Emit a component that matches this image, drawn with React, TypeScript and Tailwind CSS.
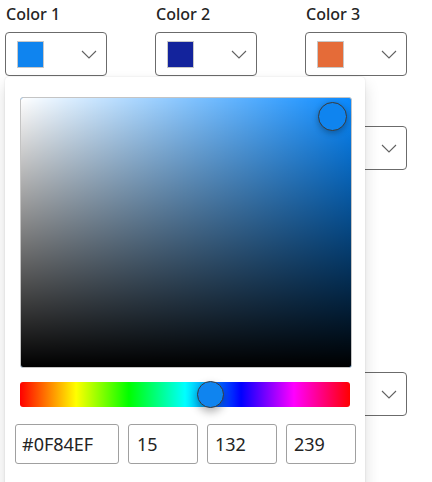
import { FC, ReactElement } from "react";

const Chevron: FC = (): ReactElement => (
  <svg width="16" height="9" viewBox="0 0 16 9" fill="none">
    <path d="M1 1l7 7 7-7" stroke="#616161" strokeWidth="1.1" />
  </svg>
);

const SwatchButton: FC<{ color: string }> = ({ color }): ReactElement => (
  <button className="flex items-center justify-between w-[102px] h-[44px] pl-[11px] pr-[9px] border border-[#6b6b6b] rounded-[4px] bg-white">
    <span className="block w-[27px] h-[27px] border border-[#c8c8c8]" style={{ background: color }} />
    <Chevron />
  </button>
);

const Field: FC<{ label: string; color: string }> = ({ label, color }): ReactElement => (
  <div className="flex flex-col gap-y-[4px]">
    <span className="text-[16px] leading-[28px] font-medium text-[#242424] pl-[1px]">{label}</span>
    <SwatchButton color={color} />
  </div>
);

const ColorPopup: FC = (): ReactElement => (
  <div className="absolute left-[5px] top-[77px] w-[360px] h-[420px] bg-white rounded-[4px] shadow-[0_0_2px_rgba(0,0,0,0.12),0_8px_16px_rgba(0,0,0,0.14)] pt-[20px]">
    <div className="relative ml-[15px] w-[332px] h-[271px] rounded-[3px] border border-[#c4c4c4] bg-[#0a8aff] overflow-visible">
      <div className="absolute inset-0 rounded-[2px] bg-[linear-gradient(to_right,#ffffff,rgba(255,255,255,0))]" />
      <div className="absolute inset-0 rounded-[2px] bg-[linear-gradient(to_top,#000000,rgba(0,0,0,0))]" />
      <div className="absolute left-[297px] top-[4px] w-[29px] h-[29px] rounded-full border-[1.5px] border-[#3a3a3a] bg-[#0F84EF] shadow-[0_2px_6px_rgba(0,0,0,0.3)]" />
    </div>

    <div className="relative ml-[15px] mt-[14px] w-[330px] h-[25px] rounded-[3px] bg-[linear-gradient(to_right,#ff0000,#ffff00_17%,#00ff00_33%,#00ffff_50%,#0000ff_67%,#ff00ff_83%,#ff0000)]">
      <div className="absolute left-[177px] top-[-1px] w-[27px] h-[27px] rounded-full border-[1.5px] border-[#3a3a3a] bg-[#0F84EF] shadow-[0_4px_8px_rgba(0,0,0,0.3)]" />
    </div>

    <div className="flex ml-[10px] mt-[17px] gap-x-[9px] text-[18px] text-[#242424]">
      <div className="w-[104px] h-[40px] flex items-center px-[6px] border border-[#a0a0a0] rounded-[3px]">#0F84EF</div>
      <div className="w-[70px] h-[40px] flex items-center px-[8px] border border-[#a0a0a0] rounded-[3px]">15</div>
      <div className="w-[70px] h-[40px] flex items-center px-[7px] border border-[#a0a0a0] rounded-[3px]">132</div>
      <div className="w-[70px] h-[40px] flex items-center px-[7px] border border-[#a0a0a0] rounded-[3px]">239</div>
    </div>
  </div>
);

export default function App(): ReactElement {
  return (
    <div className="relative w-[432px] h-[482px] overflow-hidden bg-white font-['Noto_Sans',sans-serif]">
      <div className="grid grid-cols-[150px_150px_102px] pl-[5px] gap-y-[18px]">
        <Field label="Color 1" color="#0F84EF" />
        <Field label="Color 2" color="#13239C" />
        <Field label="Color 3" color="#E56B38" />
        <Field label="Color 4" color="#2CA85A" />
        <Field label="Color 5" color="#8A2BE2" />
        <Field label="Color 6" color="#FFFFFF" />
      </div>
      <div className="grid grid-cols-[150px_150px_102px] pl-[5px] mt-[202px]">
        <SwatchButton color="#0F84EF" />
        <SwatchButton color="#13239C" />
        <SwatchButton color="#FFFFFF" />
      </div>
      <ColorPopup />
    </div>
  );
}
